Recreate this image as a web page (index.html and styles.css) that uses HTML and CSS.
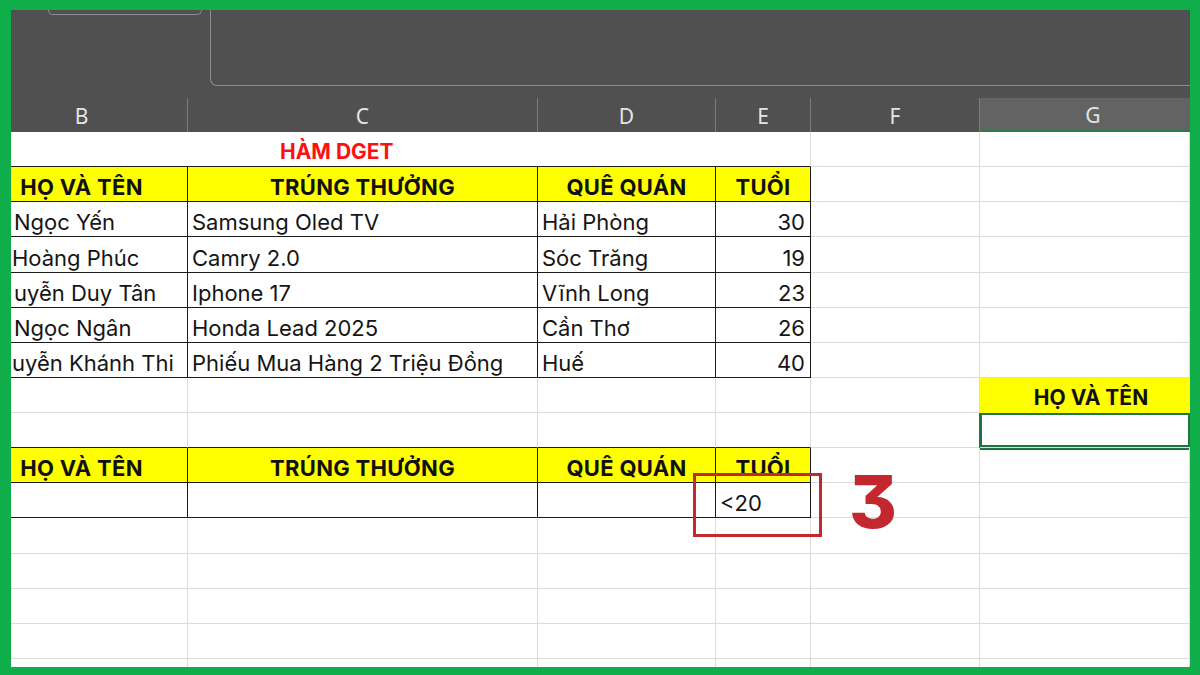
FILE: index.html
```html
<!DOCTYPE html>
<html lang="vi">
<head>
<meta charset="utf-8">
<title>Hàm DGET</title>
<link rel="stylesheet" href="styles.css">
</head>
<body>
<div class="frame">
  <div class="toolbar">
    <div class="namebox"></div>
    <div class="formulabar"></div>
  </div>
  <div class="colheads">
    <div class="ch">B</div>
    <div class="ch">C</div>
    <div class="ch">D</div>
    <div class="ch">E</div>
    <div class="ch">F</div>
    <div class="ch ch-sel">G</div>
  </div>
  <div class="sheet">
    <!-- row 1 -->
    <div class="c title bb-dark">HÀM DGET</div>
    <div class="c"></div><div class="c"></div>
    <!-- row 2 -->
    <div class="c tb hdr">HỌ VÀ TÊN</div>
    <div class="c tb hdr">TRÚNG THƯỞNG</div>
    <div class="c tb hdr">QUÊ QUÁN</div>
    <div class="c tb hdr">TUỔI</div>
    <div class="c"></div><div class="c"></div>
    <!-- data -->
    <div class="c tb name">Ngọc Yến</div>
    <div class="c tb">Samsung Oled TV</div>
    <div class="c tb">Hải Phòng</div>
    <div class="c tb num">30</div>
    <div class="c"></div><div class="c"></div>

    <div class="c tb name flush">Hoàng Phúc</div>
    <div class="c tb">Camry 2.0</div>
    <div class="c tb">Sóc Trăng</div>
    <div class="c tb num">19</div>
    <div class="c"></div><div class="c"></div>

    <div class="c tb name">uyễn Duy Tân</div>
    <div class="c tb">Iphone 17</div>
    <div class="c tb">Vĩnh Long</div>
    <div class="c tb num">23</div>
    <div class="c"></div><div class="c"></div>

    <div class="c tb name">Ngọc Ngân</div>
    <div class="c tb">Honda Lead 2025</div>
    <div class="c tb">Cần Thơ</div>
    <div class="c tb num">26</div>
    <div class="c"></div><div class="c"></div>

    <div class="c tb name flush">uyễn Khánh Thi</div>
    <div class="c tb">Phiếu Mua Hàng 2 Triệu Đồng</div>
    <div class="c tb">Huế</div>
    <div class="c tb num">40</div>
    <div class="c"></div><div class="c"></div>
    <!-- row 8 -->
    <div class="c"></div><div class="c"></div><div class="c"></div><div class="c"></div><div class="c"></div>
    <div class="c hdr hdr-g">HỌ VÀ TÊN</div>
    <!-- row 9 -->
    <div class="c bb-dark"></div><div class="c bb-dark"></div><div class="c bb-dark"></div><div class="c bb-dark"></div><div class="c"></div>
    <div class="c sel"></div>
    <!-- row 10 -->
    <div class="c tb hdr">HỌ VÀ TÊN</div>
    <div class="c tb hdr">TRÚNG THƯỞNG</div>
    <div class="c tb hdr">QUÊ QUÁN</div>
    <div class="c tb hdr">TUỔI</div>
    <div class="c"></div><div class="c"></div>
    <!-- row 11 -->
    <div class="c tb"></div>
    <div class="c tb"></div>
    <div class="c tb"></div>
    <div class="c tb">&lt;20</div>
    <div class="c"></div><div class="c"></div>
    <!-- empty rows -->
    <div class="c"></div><div class="c"></div><div class="c"></div><div class="c"></div><div class="c"></div><div class="c"></div>
    <div class="c"></div><div class="c"></div><div class="c"></div><div class="c"></div><div class="c"></div><div class="c"></div>
    <div class="c"></div><div class="c"></div><div class="c"></div><div class="c"></div><div class="c"></div><div class="c"></div>
    <div class="c"></div><div class="c"></div><div class="c"></div><div class="c"></div><div class="c"></div><div class="c"></div>
    <div class="c"></div><div class="c"></div><div class="c"></div><div class="c"></div><div class="c"></div><div class="c"></div>

    <div class="callout-box"></div>
    <div class="callout-num">3</div>
  </div>
</div>
</body>
</html>
```

FILE: styles.css
```css
* { box-sizing: border-box; }
html, body { margin: 0; padding: 0; }
body {
  width: 1200px;
  height: 675px;
  overflow: hidden;
  background: #ffffff;
  font-family: "Inter", "Noto Sans", sans-serif;
}
.frame {
  width: 1200px;
  height: 675px;
  overflow: hidden;
  border-style: solid;
  border-color: #10ae4a;
  border-width: 10px 10px 8px 11px;
  display: flex;
  flex-direction: column;
  background: #ffffff;
}
.toolbar {
  height: 88px;
  flex: none;
  background: #505050;
  display: flex;
  align-items: flex-start;
}
.namebox {
  margin-left: 37px;
  width: 154px;
  height: 5px;
  border: 1px solid #8e8e8e;
  border-top: none;
  border-radius: 0 0 6px 6px;
}
.formulabar {
  margin-left: 8px;
  flex: 1;
  height: 76px;
  border-left: 1px solid #8e8e8e;
  border-bottom: 1px solid #8e8e8e;
  border-radius: 0 0 0 7px;
}
.colheads {
  height: 34px;
  flex: none;
  margin-left: -35px;
  background: #505050;
  display: grid;
  grid-template-columns: 212px 350px 178px 95px 169px 1fr;
}
.ch {
  border-right: 1px solid #7c7c7c;
  color: #e4e4e4;
  font-family: "Noto Sans", "Open Sans", sans-serif;
  font-size: 21px;
  display: flex;
  align-items: center;
  justify-content: center;
  padding-top: 1px;
}
.ch-sel {
  background: #636363;
  border-bottom: 2px solid #2f7a4c;
  border-right: none;
  padding-left: 16px;
}
.sheet {
  position: relative;
  flex: 1;
  margin-left: -35px;
  display: grid;
  grid-template-columns: 212px 350px 178px 95px 169px 1fr;
  grid-auto-rows: 35.13px;
  align-content: start;
}
.c {
  border-right: 1px solid #dcdcdc;
  border-bottom: 1px solid #dcdcdc;
  font-size: 22px;
  line-height: 26px;
  color: #151515;
  display: flex;
  align-items: flex-end;
  padding: 0 4px 1px 4px;
  white-space: nowrap;
  overflow: hidden;
}
.tb {
  border-right-color: #1a1a1a;
  border-bottom-color: #1a1a1a;
}
.bb-dark { border-bottom-color: #1a1a1a; }
.title {
  grid-column: span 4;
  color: #ff1010;
  font-weight: 700;
  font-size: 21px;
  padding-left: 304px;
}
.hdr {
  background: #ffff00;
  font-weight: 700;
  font-size: 22px;
  letter-spacing: 0.3px;
  justify-content: center;
  color: #111111;
}
.hdr-g {
  padding-left: 16px;
  font-size: 21px;
  letter-spacing: 0;
  border-bottom-color: #ffff00;
  border-right: none;
}
.name { padding-left: 38px; }
.name.flush { padding-left: 36px; }
.num { justify-content: flex-end; padding-right: 5px; }
.sel {
  border-right: none;
  box-shadow: inset 0 0 0 2px #217346, -1px 0 0 0 #217346, 0 2px 0 0 #217346;
}
.callout-box {
  position: absolute;
  left: 717px;
  top: 341px;
  width: 129px;
  height: 64px;
  border: 3px solid #c4282f;
}
.callout-num {
  position: absolute;
  left: 873px;
  top: 333px;
  font-family: "Inter", sans-serif;
  font-feature-settings: "cv09";
  font-weight: 800;
  font-size: 73px;
  line-height: 1;
  color: #c4282f;
}
```
